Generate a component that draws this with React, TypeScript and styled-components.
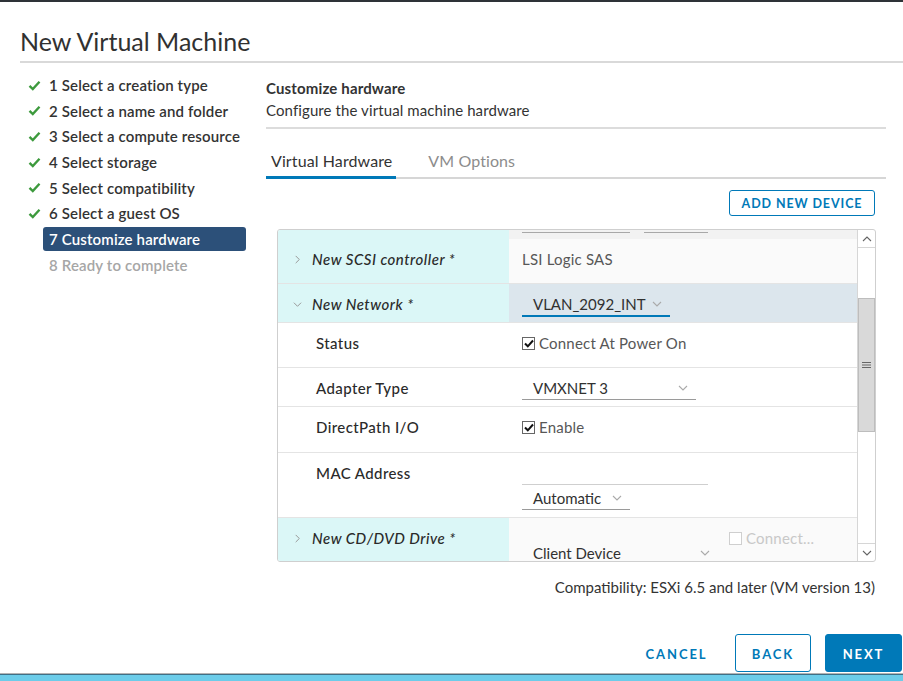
import styled, { createGlobalStyle } from "styled-components";

const GlobalStyle = createGlobalStyle`
	html, body {
		margin: 0;
		padding: 0;
		background: #fff;
	}
	body {
		font-family: Lato, "Open Sans", sans-serif;
		color: #333;
	}
	* {
		box-sizing: border-box;
	}
`;

const Page = styled.div`
	width: 903px;
	height: 681px;
	display: flex;
	flex-direction: column;
	border-top: 2px solid #2e3338;
	overflow: hidden;
`;

const Title = styled.h1`
	margin: 0 0 0 20px;
	padding: 25px 0 6px;
	font-size: 25px;
	line-height: 28px;
	font-weight: 400;
	color: #313131;
	border-bottom: 2px solid #d9d9d9;
`;

const Main = styled.div`
	display: flex;
	flex: 1;
`;

const Steps = styled.ul`
	list-style: none;
	margin: 0;
	padding: 10px 0 0 28px;
	width: 246px;
	display: flex;
	flex-direction: column;
	gap: 1.7px;
`;

const Step = styled.li`
	display: flex;
	align-items: center;
	height: 24px;
`;

const StepIcon = styled.span`
	width: 15px;
	flex-shrink: 0;
	display: flex;
	align-items: center;
`;

const StepLabel = styled.span<{ $active?: boolean; $pending?: boolean }>`
	flex: 1;
	height: 24px;
	line-height: 24px;
	padding: 0 6px;
	border-radius: 3px;
	font-size: 15px;
	font-weight: 600;
	letter-spacing: 0.15px;
	white-space: nowrap;
	color: ${(p) => (p.$active ? "#fff" : p.$pending ? "#a6a6a6" : "#333")};
	background: ${(p) => (p.$active ? "#2c5079" : "transparent")};
`;

const Content = styled.section`
	margin-left: 20px;
	width: 620px;
	padding-top: 15px;
	display: flex;
	flex-direction: column;
`;

const Intro = styled.div`
	padding-bottom: 7px;
	border-bottom: 2px solid #dcdcdc;
`;

const Heading = styled.h2`
	margin: 0;
	font-size: 15px;
	line-height: 20px;
	font-weight: 700;
	letter-spacing: 0.15px;
	color: #333;
`;

const SubHeading = styled.p`
	margin: 2px 0 0;
	font-size: 15px;
	line-height: 20px;
	letter-spacing: 0.1px;
	color: #333;
`;

const TabBar = styled.div`
	margin-top: 12px;
	height: 38px;
	display: flex;
	gap: 27px;
	border-bottom: 2px solid #d6d6d6;
`;

const Tab = styled.div<{ $active?: boolean }>`
	height: 38px;
	margin-bottom: -2px;
	padding: 2px 4px 0 5px;
	line-height: 36px;
	font-size: 16px;
	letter-spacing: 0.1px;
	color: ${(p) => (p.$active ? "#333" : "#8c8c8c")};
	border-bottom: 3px solid ${(p) => (p.$active ? "#0079b8" : "transparent")};
`;

const Toolbar = styled.div`
	display: flex;
	justify-content: flex-end;
	padding: 11px 11px 0 0;
`;

const OutlineButton = styled.button`
	height: 26px;
	width: 146px;
	padding: 0;
	border: 1px solid #0079b8;
	border-radius: 3px;
	background: #fff;
	color: #0079b8;
	font-family: inherit;
	font-size: 12.5px;
	font-weight: 700;
	letter-spacing: 0.9px;
`;

const Grid = styled.div`
	margin: 13px 10px 0 11px;
	height: 333px;
	display: flex;
	border: 1px solid #cfcfcf;
	border-radius: 3px;
	overflow: hidden;
`;

const Rows = styled.div`
	flex: 1;
	overflow: hidden;
`;

const Row = styled.div<{ $h: number }>`
	display: grid;
	grid-template-columns: 231px 1fr;
	height: ${(p) => p.$h}px;
	border-bottom: 1px solid #e4e4e4;
`;

const LabelCell = styled.div<{ $device?: boolean }>`
	display: flex;
	align-items: flex-start;
	padding: 10px 0 0 ${(p) => (p.$device ? 15 : 38)}px;
	background: ${(p) => (p.$device ? "#dbf7f7" : "#fff")};
	font-size: 15px;
	line-height: 20px;
	letter-spacing: ${(p) => (p.$device ? 0.5 : 0.4)}px;
	font-weight: 500;
	font-style: ${(p) => (p.$device ? "italic" : "normal")};
	color: #2a2a2a;
	white-space: nowrap;
`;

const Caret = styled.span`
	width: 19px;
	height: 20px;
	display: flex;
	align-items: center;
	color: #999;
`;

const ValueCell = styled.div<{ $bg?: string }>`
	display: flex;
	flex-direction: column;
	align-items: flex-start;
	padding: 10px 0 0 13px;
	background: ${(p) => p.$bg || "#fff"};
	font-size: 15px;
	line-height: 20px;
	letter-spacing: 0.2px;
	color: #575757;
	white-space: nowrap;
`;

const ValueLine = styled.div`
	display: flex;
	align-items: flex-start;
`;

const Stub = styled.div`
	display: flex;
	gap: 14px;
	padding-left: 13px;
	padding-top: 2px;
	background: #f2f2f2;
`;

const StubLine = styled.span<{ $w: number }>`
	width: ${(p) => p.$w}px;
	height: 1px;
	background: #a8a8a8;
`;

const Select = styled.div<{ $w: number; $focus?: boolean; $mt?: number }>`
	width: ${(p) => p.$w}px;
	margin-top: ${(p) => p.$mt || 0}px;
	display: flex;
	align-items: center;
	justify-content: space-between;
	padding: 0 8px 1px 11px;
	border-bottom: ${(p) => (p.$focus ? "2px solid #0079b8" : "1px solid #9a9a9a")};
	color: #313131;
	letter-spacing: 0;
`;

const TextInput = styled.div<{ $w: number }>`
	width: ${(p) => p.$w}px;
	height: 22px;
	border-bottom: 1px solid #cfcfcf;
`;

const Check = styled.label<{ $disabled?: boolean; $ml?: number }>`
	display: flex;
	align-items: center;
	gap: 4px;
	margin-left: ${(p) => p.$ml || 0}px;
	color: ${(p) => (p.$disabled ? "#c8c8c8" : "#575757")};
`;

const Box = styled.span<{ $disabled?: boolean }>`
	width: 13px;
	height: 13px;
	display: flex;
	align-items: center;
	justify-content: center;
	border: 1px solid ${(p) => (p.$disabled ? "#cfcfcf" : "#666")};
	background: #fff;
`;

const ScrollBar = styled.div`
	width: 18px;
	display: flex;
	flex-direction: column;
	border-left: 1px solid #d6d6d6;
`;

const ScrollArrow = styled.div<{ $down?: boolean }>`
	height: 18px;
	display: flex;
	align-items: center;
	justify-content: center;
	color: #777;
	border-top: ${(p) => (p.$down ? "1px solid #d6d6d6" : "none")};
	border-bottom: ${(p) => (p.$down ? "none" : "1px solid #d6d6d6")};
`;

const Track = styled.div`
	flex: 1;
	padding-top: 50px;
`;

const Thumb = styled.div`
	height: 134px;
	display: flex;
	align-items: center;
	justify-content: center;
	background: #d9d9d9;
	border: 1px solid #bdbdbd;
	color: #777;
`;

const Compat = styled.p`
	margin: 15px 11px 0 0;
	text-align: right;
	font-size: 15px;
	line-height: 20px;
	letter-spacing: 0;
	color: #333;
`;

const Footer = styled.div`
	display: flex;
	justify-content: flex-end;
	align-items: center;
	gap: 14px;
	padding: 0 1px 1px 0;
`;

const ActionButton = styled.button<{ $kind: "flat" | "outline" | "solid" }>`
	height: 38px;
	width: ${(p) => (p.$kind === "outline" ? 76 : 77)}px;
	padding: 2px 0 0;
	border-radius: 3px;
	font-family: inherit;
	font-size: 13px;
	font-weight: 700;
	letter-spacing: 1.9px;
	border: 1px solid ${(p) => (p.$kind === "flat" ? "transparent" : "#0079b8")};
	background: ${(p) => (p.$kind === "solid" ? "#0079b8" : "#fff")};
	color: ${(p) => (p.$kind === "solid" ? "#fff" : "#0079b8")};
	margin-right: ${(p) => (p.$kind === "flat" ? 6 : 0)}px;
`;

const BottomBar = styled.div`
	height: 8px;
	border-top: 1px solid #b3b3b3;
	box-shadow: inset 0 1px 0 #3f6f86;
	background: #6ccce9;
`;

const Tick = () => (
	<svg width="13" height="11" viewBox="0 0 13 11">
		<path d="M1.5 5.8 L4.8 9 L11.5 1.8" fill="none" stroke="#3d9a3d" strokeWidth="2.4" />
	</svg>
);

const Chevron = ({ dir, size = 9, color = "#999" }: { dir: "right" | "down" | "up"; size?: number; color?: string }) => {
	const d =
		dir === "right" ? "M3 1 L7 5 L3 9" : dir === "down" ? "M1 3 L5 7 L9 3" : "M1 7 L5 3 L9 7";
	return (
		<svg width={size} height={size} viewBox="0 0 10 10">
			<path d={d} fill="none" stroke={color} strokeWidth="1.1" />
		</svg>
	);
};

const CheckMark = () => (
	<svg width="10" height="9" viewBox="0 0 10 9">
		<path d="M1 4.5 L3.8 7.3 L9 1.5" fill="none" stroke="#111" strokeWidth="2" />
	</svg>
);

const Grip = () => (
	<svg width="9" height="8" viewBox="0 0 9 8">
		<path d="M0 1.5 H9 M0 4 H9 M0 6.5 H9" stroke="#666" strokeWidth="1" />
	</svg>
);

const steps = [
	"1 Select a creation type",
	"2 Select a name and folder",
	"3 Select a compute resource",
	"4 Select storage",
	"5 Select compatibility",
	"6 Select a guest OS",
	"7 Customize hardware",
	"8 Ready to complete",
];

function Checkbox({ label, disabled, ml }: { label: string; disabled?: boolean; ml?: number }) {
	return (
		<Check $disabled={disabled} $ml={ml}>
			<Box $disabled={disabled}>{!disabled && <CheckMark />}</Box>
			{label}
		</Check>
	);
}

function Dropdown({ value, w, focus, mt }: { value: string; w: number; focus?: boolean; mt?: number }) {
	return (
		<Select $w={w} $focus={focus} $mt={mt}>
			<span>{value}</span>
			<Chevron dir="down" size={10} color="#aaa" />
		</Select>
	);
}

export default function App() {
	return (
		<>
			<GlobalStyle />
			<Page>
				<Title>New Virtual Machine</Title>
				<Main>
					<Steps>
						{steps.map((s, i) => (
							<Step key={s}>
								<StepIcon>{i < 6 && <Tick />}</StepIcon>
								<StepLabel $active={i === 6} $pending={i === 7}>
									{s}
								</StepLabel>
							</Step>
						))}
					</Steps>
					<Content>
						<Intro>
							<Heading>Customize hardware</Heading>
							<SubHeading>Configure the virtual machine hardware</SubHeading>
						</Intro>
						<TabBar>
							<Tab $active>Virtual Hardware</Tab>
							<Tab>VM Options</Tab>
						</TabBar>
						<Toolbar>
							<OutlineButton>ADD NEW DEVICE</OutlineButton>
						</Toolbar>
						<Grid>
							<Rows>
								<Row $h={9}>
									<LabelCell $device />
									<Stub>
										<StubLine $w={108} />
										<StubLine $w={64} />
									</Stub>
								</Row>
								<Row $h={45}>
									<LabelCell $device>
										<Caret>
											<Chevron dir="right" />
										</Caret>
										New SCSI controller *
									</LabelCell>
									<ValueCell $bg="#fafafa">LSI Logic SAS</ValueCell>
								</Row>
								<Row $h={39}>
									<LabelCell $device>
										<Caret>
											<Chevron dir="down" />
										</Caret>
										New Network *
									</LabelCell>
									<ValueCell $bg="#dce6ed">
										<Dropdown value="VLAN_2092_INT" w={148} focus />
									</ValueCell>
								</Row>
								<Row $h={45}>
									<LabelCell>Status</LabelCell>
									<ValueCell>
										<Checkbox label="Connect At Power On" />
									</ValueCell>
								</Row>
								<Row $h={39}>
									<LabelCell>Adapter Type</LabelCell>
									<ValueCell>
										<Dropdown value="VMXNET 3" w={174} />
									</ValueCell>
								</Row>
								<Row $h={46}>
									<LabelCell>DirectPath I/O</LabelCell>
									<ValueCell>
										<Checkbox label="Enable" />
									</ValueCell>
								</Row>
								<Row $h={65}>
									<LabelCell>MAC Address</LabelCell>
									<ValueCell>
										<TextInput $w={186} />
										<Dropdown value="Automatic" w={108} mt={3} />
									</ValueCell>
								</Row>
								<Row $h={50}>
									<LabelCell $device>
										<Caret>
											<Chevron dir="right" />
										</Caret>
										New CD/DVD Drive *
									</LabelCell>
									<ValueCell $bg="#fafafa">
										<ValueLine>
											<Dropdown value="Client Device" w={196} mt={15} />
											<Checkbox label="Connect..." disabled ml={11} />
										</ValueLine>
									</ValueCell>
								</Row>
							</Rows>
							<ScrollBar>
								<ScrollArrow>
									<Chevron dir="up" size={10} color="#666" />
								</ScrollArrow>
								<Track>
									<Thumb>
										<Grip />
									</Thumb>
								</Track>
								<ScrollArrow $down>
									<Chevron dir="down" size={10} color="#666" />
								</ScrollArrow>
							</ScrollBar>
						</Grid>
						<Compat>Compatibility: ESXi 6.5 and later (VM version 13)</Compat>
					</Content>
				</Main>
				<Footer>
					<ActionButton $kind="flat">CANCEL</ActionButton>
					<ActionButton $kind="outline">BACK</ActionButton>
					<ActionButton $kind="solid">NEXT</ActionButton>
				</Footer>
				<BottomBar />
			</Page>
		</>
	);
}
